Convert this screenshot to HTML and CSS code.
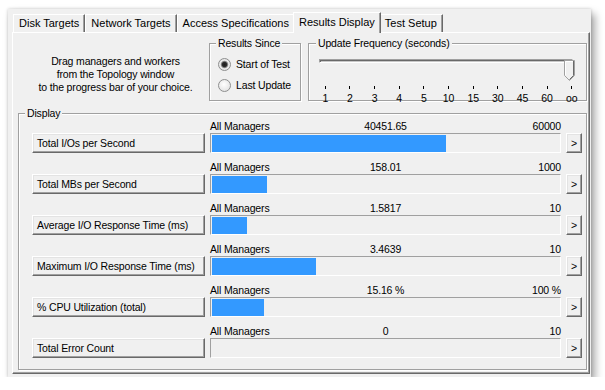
FILE: index.html
```html
<!DOCTYPE html>
<html lang="en">
<head>
  <meta charset="UTF-8">
  <title>Results Display</title>
  <link rel="stylesheet" href="styles.css">
</head>
<body>

  <div class="window">
    <!-- tab strip -->
    <div class="tabs">
      <div class="tab">Disk Targets</div>
      <div class="tab">Network Targets</div>
      <div class="tab">Access Specifications</div>
      <div class="tab active">Results Display</div>
      <div class="tab">Test Setup</div>
    </div>

    <div class="panel">
      <div class="top-row">
        <p class="intro">Drag managers and workers<br>from the Topology window<br>to the progress bar of your choice.</p>

        <div class="group since">
          <div class="group-title">Results Since</div>
          <label class="radio"><span class="dot checked"></span>Start of Test</label>
          <label class="radio"><span class="dot"></span>Last Update</label>
        </div>

        <div class="group freq">
          <div class="group-title">Update Frequency (seconds)</div>
          <div class="slider">
            <div class="groove"></div>
            <svg class="thumb" width="11" height="21" viewBox="0 0 11 21">
              <path d="M0.5 15.5 V0.5 H10.5 V15.5 L5.5 20.5 Z" fill="#f0f0f0" stroke="#a0a0a0"/>
              <path d="M1.5 15 V1.5 H9" fill="none" stroke="#fff"/>
              <path d="M9.5 1 V15.5 L5.5 19.5" fill="none" stroke="#696969"/>
            </svg>
          </div>
          <div class="ticks">
            <span>1</span><span>2</span><span>3</span><span>4</span><span>5</span>
            <span>10</span><span>15</span><span>30</span><span>45</span><span>60</span><span>oo</span>
          </div>
        </div>
      </div>

      <div class="group display">
        <div class="group-title">Display</div>

        <div class="metric">
          <div class="head"><span>All Managers</span><span class="val">40451.65</span><span class="max">60000</span></div>
          <button class="btn">Total I/Os per Second</button>
          <div class="bar"><div class="fill" style="width:234px"></div></div>
          <button class="arrow">&gt;</button>
        </div>

        <div class="metric">
          <div class="head"><span>All Managers</span><span class="val">158.01</span><span class="max">1000</span></div>
          <button class="btn">Total MBs per Second</button>
          <div class="bar"><div class="fill" style="width:55px"></div></div>
          <button class="arrow">&gt;</button>
        </div>

        <div class="metric">
          <div class="head"><span>All Managers</span><span class="val">1.5817</span><span class="max">10</span></div>
          <button class="btn">Average I/O Response Time (ms)</button>
          <div class="bar"><div class="fill" style="width:35px"></div></div>
          <button class="arrow">&gt;</button>
        </div>

        <div class="metric">
          <div class="head"><span>All Managers</span><span class="val">3.4639</span><span class="max">10</span></div>
          <button class="btn">Maximum I/O Response Time (ms)</button>
          <div class="bar"><div class="fill" style="width:104px"></div></div>
          <button class="arrow">&gt;</button>
        </div>

        <div class="metric">
          <div class="head"><span>All Managers</span><span class="val">15.16 %</span><span class="max">100 %</span></div>
          <button class="btn">% CPU Utilization (total)</button>
          <div class="bar"><div class="fill" style="width:52px"></div></div>
          <button class="arrow">&gt;</button>
        </div>

        <div class="metric">
          <div class="head"><span>All Managers</span><span class="val">0</span><span class="max">10</span></div>
          <button class="btn">Total Error Count</button>
          <div class="bar"><div class="fill" style="width:0"></div></div>
          <button class="arrow">&gt;</button>
        </div>
      </div>
    </div>
  </div>

</body>
</html>
```

FILE: styles.css
```css
/* ─── base ─── */
* { box-sizing: border-box; }
body {
  margin: 0; background: #fff; color: #000;
  font: 10.5px/13px "Liberation Sans", Arial, sans-serif;
  letter-spacing: -0.15px;
}

/* ─── window ─── */
.window {
  width: 583px; height: 368px;
  margin: 9px 0 0 8px;
  padding: 3px 1px 0 4px;
  background: #f0f0f0;
  box-shadow: 0 0 3px rgba(0,0,0,0.2), 4px 5px 8px rgba(0,0,0,0.35);
}

/* tab strip */
.tabs { display: flex; align-items: flex-end; height: 20px; padding-left: 1px; }
.tab {
  height: 18px; line-height: 17px; padding: 0 5px;
  font-size: 11px; letter-spacing: 0;
  border: 1px solid; border-bottom: none;
  border-color: #fff #696969 transparent #fff;
  box-shadow: inset -1px 0 #a0a0a0;
  white-space: nowrap;
}
.tab.active {
  position: relative; z-index: 1;
  height: 21px; line-height: 18px;
  margin: 0 -2px -1px; padding: 0 5px;
  background: #f0f0f0;
}

.panel {
  height: 342px;
  border: 1px solid; border-color: #fff #696969 #696969 #fff;
  box-shadow: inset -1px -1px #a0a0a0;
  padding: 10px 2px 3px 5px;
}

/* ─── group boxes ─── */
.group {
  border: 1px solid #a0a0a0;
  box-shadow: inset 1px 1px #fff, 1px 1px #fff;
}
.group-title {
  width: fit-content;
  margin-top: -7px; padding: 0 2px;
  background: #f0f0f0;
  white-space: nowrap;
}

.top-row { display: flex; height: 58px; }
.intro {
  width: 187px; margin: 0 4px 0 0; padding: 12px 0 0 8px;
  text-align: center; white-space: nowrap;
}

.since { width: 92px; padding: 0 0 0 8px; margin-right: 7px; }
.since .group-title { margin-left: -2px; margin-bottom: 4px; }
.radio { display: flex; align-items: center; gap: 5px; height: 21px; white-space: nowrap; }
.dot {
  flex: none;
  width: 13px; height: 13px; border-radius: 50%;
  border: 1px solid #8e8f8f;
  background: radial-gradient(circle at 45% 40%, #fff 0, #e6e6e6 70%, #d5d5d5 100%);
}
.dot.checked {
  background: radial-gradient(circle at 50% 50%, #1c1c1c 0, #2d2d2d 2.2px, #9a9a9a 3.4px, #ececec 4.2px, #dcdcdc 100%);
}

.freq { width: 279px; padding-left: 4px; }
.freq .group-title { margin-left: 3px; }
.slider { position: relative; width: 271px; height: 22px; margin-top: 1px; }
.groove {
  margin: 9px 11px 0 6px; height: 4px;
  border: 1px solid; border-color: #a0a0a0 #fff #fff #a0a0a0;
  background: #c8c8c8;
  box-shadow: inset 1px 1px #696969;
}
.thumb { position: absolute; left: 251px; top: 1px; }
.ticks {
  display: grid; grid-template-columns: repeat(11, 1fr);
  width: 271px; margin-top: 5px; text-align: center;
}
.ticks span::before {
  content: ""; display: block;
  width: 1px; height: 3px; margin: 0 auto 3px;
  background: #000;
}

/* ─── display group ─── */
.display { margin-top: 12px; height: 257px; padding: 0 4px 11px 13px; }
.display .group-title { margin-left: -7px; }

.metric {
  display: grid;
  grid-template-columns: 173px 351px 16px;
  grid-template-rows: 13px 20px;
  column-gap: 5px;
  margin-bottom: 8px;
}
.metric:last-child { margin-bottom: 0; }
.head { grid-column: 2; display: grid; grid-template-columns: 1fr auto 1fr; white-space: pre; }
.head .max { text-align: right; }

.btn, .arrow {
  grid-row: 2;
  margin: 0; font: inherit; color: #000; letter-spacing: inherit;
  background: #f0f0f0;
  border: 1px solid; border-color: #fff #696969 #696969 #fff;
  box-shadow: inset -1px -1px #a0a0a0, inset 1px 1px #e3e3e3;
  white-space: nowrap;
}
.btn { grid-column: 1; text-align: left; padding: 0 4px; }
.arrow { grid-column: 3; padding: 0; text-align: center; }

.bar {
  grid-row: 2; grid-column: 2;
  border: 1px solid; border-color: #a0a0a0 #fff #fff #a0a0a0;
  padding: 1px 1px 0;
}
.fill { height: 17px; background: #3399ff; }
```
